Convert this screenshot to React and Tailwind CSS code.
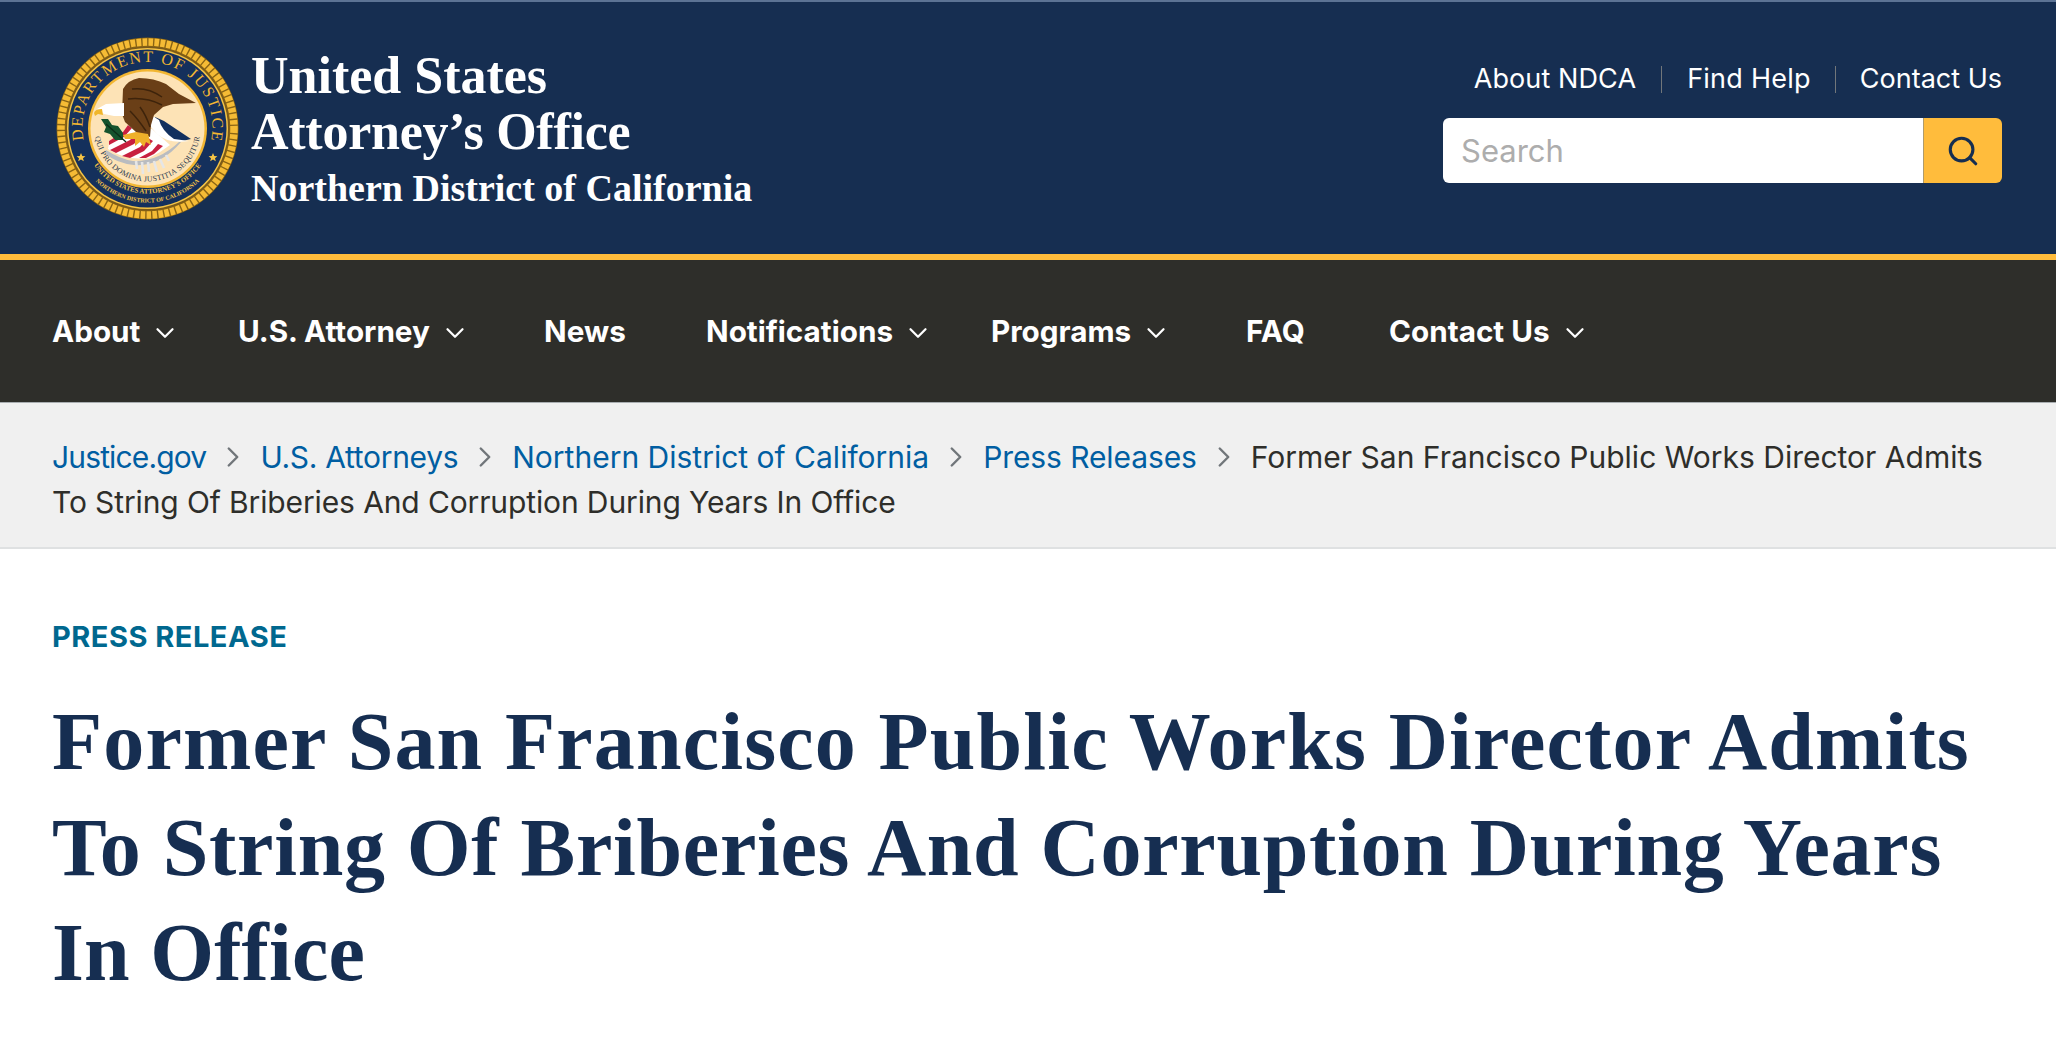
import React from "react";
import { ChevronDown, ChevronRight, Search } from "lucide-react";

const navItems = [
  { label: "About", menu: true, width: "w-[186px]" },
  { label: "U.S. Attorney", menu: true, width: "w-[306px]" },
  { label: "News", menu: false, width: "w-[162px]" },
  { label: "Notifications", menu: true, width: "w-[285px]" },
  { label: "Programs", menu: true, width: "w-[255px]" },
  { label: "FAQ", menu: false, width: "w-[143px]" },
  { label: "Contact Us", menu: true, width: "w-[260px]" },
];

const crumbs = [
  { label: "Justice.gov", extra: "tracking-[-0.85px]" },
  { label: "U.S. Attorneys", extra: "tracking-[-0.3px]" },
  { label: "Northern District of California", extra: "" },
  { label: "Press Releases", extra: "tracking-[-0.1px]" },
];

const Seal = () => (
  <svg viewBox="0 0 183 183" className="w-[183px] h-[183px] shrink-0">
    <defs>
      <path id="sealTop" d="M 28.5 106 A 65 65 0 1 1 154.5 106" />
      <path id="sealQui" d="M 38.5 91.5 A 53 53 0 0 0 144.5 91.5" />
      <path id="sealUsao" d="M 26.5 91.5 A 65 65 0 0 0 156.5 91.5" />
      <path id="sealNd" d="M 17.5 91.5 A 74 74 0 0 0 165.5 91.5" />
    </defs>
    <circle cx="91.5" cy="91.5" r="91" fill="#8a6414" />
    <circle cx="91.5" cy="91.5" r="86.5" fill="none" stroke="#f5bb35" strokeWidth="7.5" strokeDasharray="4.6 1.4" />
    <circle cx="91.5" cy="91.5" r="82" fill="#7a5a1a" />
    <circle cx="91.5" cy="91.5" r="80.5" fill="#f6c445" />
    <circle cx="91.5" cy="91.5" r="79" fill="#14305c" />
    <circle cx="91.5" cy="91.5" r="59.5" fill="#f2b632" />
    <circle cx="91.5" cy="91.5" r="57" fill="#fde3b6" />
    <text fill="#f2b632" fontFamily="Liberation Serif, serif" fontSize="16" textLength="230">
      <textPath href="#sealTop" startOffset="50%" textAnchor="middle">DEPARTMENT OF JUSTICE</textPath>
    </text>
    <text fill="#f6c445" fontFamily="Liberation Serif, serif" fontSize="6.8" fontWeight="700">
      <textPath href="#sealUsao" startOffset="50%" textAnchor="middle">UNITED STATES ATTORNEY'S OFFICE</textPath>
    </text>
    <text fill="#f6c445" fontFamily="Liberation Serif, serif" fontSize="6" fontWeight="700">
      <textPath href="#sealNd" startOffset="50%" textAnchor="middle">NORTHERN DISTRICT OF CALIFORNIA</textPath>
    </text>
    <text fill="#2c3a50" fontFamily="Liberation Serif, serif" fontSize="7.8" letterSpacing="0.3">
      <textPath href="#sealQui" startOffset="50%" textAnchor="middle">QUI PRO DOMINA JUSTITIA SEQUITUR</textPath>
    </text>
    <path d="M25 116 l1.3 2.9 3.1 0.3 -2.4 2 0.8 3 -2.8 -1.6 -2.8 1.6 0.8 -3 -2.4 -2 3.1 -0.3z" fill="#f6c445" />
    <path d="M157 116 l1.3 2.9 3.1 0.3 -2.4 2 0.8 3 -2.8 -1.6 -2.8 1.6 0.8 -3 -2.4 -2 3.1 -0.3z" fill="#f6c445" />
    {/* crescent under the shield */}
    <path d="M50 113 Q64 122 77 124 Q102 125 123 105 L125 105 Q104 130 78 128 Q60 126 50 117z" fill="#b9bcc0" />
    {/* arrows */}
    <path d="M80 124 L81 132 M86 125 L87 137 M92 125 L93 135 M98 124 L101 135 M104 122 L108 131 M110 118 L113 124" stroke="#e6e6e6" strokeWidth="2.6" fill="none" />
    {/* flag */}
    <path d="M52 112 L53.5 103.5 L67 95 L73.5 86 L96 92 L114 108 Q104 116 93 121 Q70 124 52 112z" fill="#fff" />
    <path d="M53 104 L67 95 L72 88 L76 91 L68 100 L53 108z M54 113 L74 103 L82 94 L87 97 L78 107 L60 116z M66 119 L84 110 L92 101 L97 104 L88 114 L74 121z M83 121 L96 114 L102 107 L107 109 L98 117 L90 121z" fill="#c8203f" />
    {/* right wing, navy with white edge */}
    <path d="M99 80 L108 84 L135 102 Q122 106 111 102 L102 92z" fill="#12305e" />
    <path d="M95 78 L103 83 Q106 94 118 102 L133 104 Q112 107 101 97 L95 90z" fill="#fff" />
    {/* olive branch */}
    <path d="M45 82 L52 82 L56 88 L62 89 L67 96 L67 103 L59 103 L54 97 L48 95 L50 90z" fill="#14532d" />
    <path d="M50 87 L70 105" stroke="#0b2e18" strokeWidth="1.3" />
    {/* eagle body */}
    <path d="M66 77 L67 52 Q72 43 83 41 Q98 41 110 47 L123 57 L140 66 L117 67 L107 70 L98 78 L95 88 L94 100 L80 95 L69 85z" fill="#6a3f17" />
    <path d="M76 52 Q92 50 106 60 M72 62 Q90 60 106 68 M74 74 Q82 82 90 94 M84 70 Q90 78 94 90" stroke="#3d230b" strokeWidth="1.5" fill="none" />
    {/* head */}
    <path d="M41 72 L50 67 L68 66 L68 79 L58 79 L48 77z" fill="#fff" />
    <path d="M38 76 Q39 72 46 72 L47 78 L42 77 L39 79z" fill="#f0b62a" />
    {/* talons */}
    <path d="M67 98 L80 95 L92 97 L95 108 L90 105 L88 110 L84 105 L79 109 L79 102 L69 102z" fill="#eeb02a" />
  </svg>
);

const App = () => {
  return (
    <div className="w-full bg-white font-['Inter',sans-serif]">
      <header className="h-[254px] bg-[#162e51] border-t-2 border-[#5c7394] pl-[56px] pr-[54px] flex justify-between">
        <div className="flex items-start pt-[35px] gap-[12px]">
          <Seal />
          <div className="pt-[11px] text-white font-['Liberation_Serif',serif] font-bold">
            <div className="text-[52px] leading-[56px]">United States</div>
            <div className="text-[52px] leading-[56px] tracking-[-0.25px]">Attorney’s Office</div>
            <div className="text-[38px] leading-[56px]">Northern District of California</div>
          </div>
        </div>
        <div className="flex flex-col items-end pt-[63px]">
          <div className="flex items-center text-white text-[27px] leading-[28px]">
            <a className="tracking-[0.1px]">About NDCA</a>
            <span className="w-px h-[27px] bg-[#71767a] mx-[25px]" />
            <a className="tracking-[0.25px]">Find Help</a>
            <span className="w-px h-[27px] bg-[#71767a] mx-[24px]" />
            <a>Contact Us</a>
          </div>
          <div className="flex mt-[25px] h-[65px] w-[559px]">
            <div className="flex-1 bg-white rounded-l-md pl-[18px] pt-[2px] flex items-center text-[31px] text-[#adadad]">Search</div>
            <button className="w-[79px] bg-[#ffbc3c] border-l border-[#b09c6c] rounded-r-md flex items-center justify-center">
              <Search className="w-[34px] h-[34px] text-[#162e51]" strokeWidth={2.2} />
            </button>
          </div>
        </div>
      </header>
      <div className="h-[6px] bg-[#ffbc3c]" />

      <nav className="h-[142px] bg-[#2e2e2a] pl-[52px] flex items-center text-white font-bold text-[29.7px]">
        {navItems.map((item) => (
          <div key={item.label} className={`${item.width} flex items-center gap-[10px] shrink-0`}>
            <span>{item.label}</span>
            {item.menu && <ChevronDown className="w-[30px] h-[30px] mt-[5px]" strokeWidth={1.8} />}
          </div>
        ))}
      </nav>

      <div className="h-[147px] bg-[#f0f0f0] border-t border-[#a9aeb1] border-b-2 border-b-[#dfe1e2] px-[52px] pt-[32px] text-[30px] leading-[45px] text-[#2e2e2a]">
        {crumbs.map((crumb) => (
          <React.Fragment key={crumb.label}>
            <a className={`text-[#005ea2] ${crumb.extra}`}>{crumb.label}</a>
            <ChevronRight className="inline-block w-[34px] h-[34px] mx-[10px] mb-[6px] text-[#71767a]" strokeWidth={1.7} />
          </React.Fragment>
        ))}
        <span className="inline-block">Former San Francisco Public Works Director Admits</span>{" "}
        <span className="inline-block tracking-[-0.12px]">To String Of Briberies And Corruption During Years In Office</span>
      </div>

      <main className="px-[52px] pt-[70px]">
        <div className="text-[29px] leading-[36px] font-bold uppercase tracking-[0.5px] text-[#00688f]">Press Release</div>
        <h1 className="mt-[34px] font-['Liberation_Serif',serif] font-bold text-[82px] leading-[105.5px] text-[#162e51]">
          <span className="block tracking-[1.15px]">Former San Francisco Public Works Director Admits</span>
          <span className="block tracking-[0.7px]">To String Of Briberies And Corruption During Years</span>
          <span className="block tracking-[0.1px]">In Office</span>
        </h1>
      </main>
    </div>
  );
};

export default App;
